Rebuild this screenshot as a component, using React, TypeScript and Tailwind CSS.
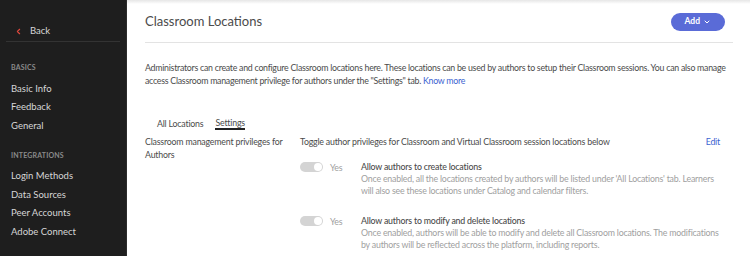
import { ChevronLeft, ChevronDown } from "lucide-react";

const basics = ["Basic Info", "Feedback", "General"];
const integrations = ["Login Methods", "Data Sources", "Peer Accounts", "Adobe Connect"];

function Toggle() {
  return (
    <div className="self-start flex items-center gap-[7px] w-[61px] shrink-0 pt-[1px]">
      <div className="relative w-[23px] h-[10px] rounded-full bg-[#d4d4d4]">
        <div className="absolute right-[1px] top-[1px] w-[8px] h-[8px] rounded-full bg-white" />
      </div>
      <span className="text-[#a0a0a0]">Yes</span>
    </div>
  );
}

function Privilege({ title, desc }: { title: string; desc: string }) {
  return (
    <div className="flex items-start pr-[10px]">
      <Toggle />
      <div className="flex-1">
        <div className="text-[#4b4b4b] font-medium leading-[13px]">{title}</div>
        <div className="text-[#a0a0a0] leading-[12.5px]">{desc}</div>
      </div>
    </div>
  );
}

export default function App() {
  return (
    <div
      className="flex w-[750px] h-[256px] overflow-hidden bg-white text-[8.8px] tracking-[-0.2px]"
      style={{ fontFamily: "Lato, 'Noto Sans', sans-serif" }}
    >
      <aside className="w-[127px] shrink-0 bg-[#1e1e1e] border-r border-[#2c2c2c] text-[#d6d6d6] tracking-normal">
        <div className="mx-[6px] mt-[24px] pb-[3px] border-b border-[#333] flex items-center">
          <ChevronLeft size={9} strokeWidth={3} className="text-[#e0483d] ml-[8px]" />
          <span className="ml-[7px] text-[9.5px]">Back</span>
        </div>
        <div className="px-[11px] mt-[20px] text-[7px] font-bold tracking-wide text-[#8a8a8a]">BASICS</div>
        <ul className="px-[11px] mt-[10px] flex flex-col gap-[6.5px] text-[9.5px]">
          {basics.map((b) => <li key={b} className="leading-[12px]">{b}</li>)}
        </ul>
        <div className="px-[11px] mt-[18px] text-[7px] font-bold tracking-wide text-[#8a8a8a]">INTEGRATIONS</div>
        <ul className="px-[11px] mt-[10px] flex flex-col gap-[6.5px] text-[9.5px]">
          {integrations.map((b) => <li key={b} className="leading-[12px]">{b}</li>)}
        </ul>
      </aside>

      <main className="relative flex-1 pl-[18px] pr-[17px]">
        <div className="absolute inset-x-0 top-0 h-[4px] bg-gradient-to-b from-[#e6e6e6] to-white" />
        <div className="flex items-center justify-between pt-[12px] pb-[10px] pr-[8px] border-b border-[#e3e3e3]">
          <h1 className="text-[13px] text-[#4b4b4b] tracking-normal">Classroom Locations</h1>
          <button className="flex items-center gap-[3px] h-[18px] px-[14px] rounded-full bg-[#5a6bd7] text-white text-[8.5px] font-bold tracking-normal">
            Add <ChevronDown size={8} strokeWidth={3} />
          </button>
        </div>

        <p className="mt-[18px] -mr-[4px] text-[#4b4b4b] leading-[13px] tracking-[-0.26px]">
          Administrators can create and configure Classroom locations here. These locations can be used by authors to setup their Classroom sessions. You can also manage access Classroom management privilege for authors under the "Settings" tab.{" "}
          <span className="text-[#3b63d1]">Know more</span>
        </p>

        <div className="flex gap-[12px] mt-[30px] pl-[12px] text-[#4b4b4b]">
          <span>All Locations</span>
          <span className="border-b-2 border-[#222] leading-[11px]">Settings</span>
        </div>

        <div className="flex mt-[5px] text-[#4b4b4b]">
          <div className="w-[155px] shrink-0 leading-[13px] pr-[10px]">Classroom management privileges for Authors</div>
          <div className="flex-1">
            <div className="flex justify-between pr-[13px] leading-[13px]">
              <span>Toggle author privileges for Classroom and Virtual Classroom session locations below</span>
              <span className="text-[#3b63d1]">Edit</span>
            </div>
            <div className="mt-[12px] flex flex-col gap-[16px]">
              <Privilege
                title="Allow authors to create locations"
                desc="Once enabled, all the locations created by authors will be listed under 'All Locations' tab. Learners will also see these locations under Catalog and calendar filters."
              />
              <Privilege
                title="Allow authors to modify and delete locations"
                desc="Once enabled, authors will be able to modify and delete all Classroom locations. The modifications by authors will be reflected across the platform, including reports."
              />
            </div>
          </div>
        </div>
      </main>
    </div>
  );
}
